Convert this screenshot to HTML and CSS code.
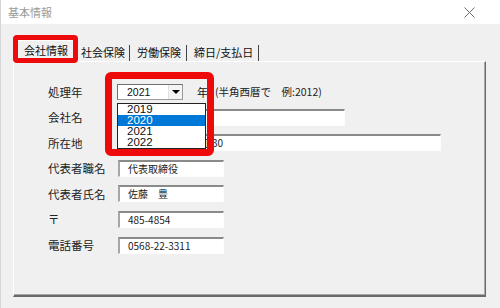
FILE: index.html
```html
<!DOCTYPE html>
<html lang="ja">
<head>
    <meta charset="UTF-8">
    <title>基本情報</title>
    <link rel="stylesheet" href="styles.css">
</head>
<body>
    <div class="window">
        <div class="titlebar">
            <span class="title">基本情報</span>
            <svg class="close" width="11" height="11" viewBox="0 0 11 11"><path d="M0.5 0.5L10.5 10.5M10.5 0.5L0.5 10.5" stroke="#6a6a6a" stroke-width="1"/></svg>
        </div>

        <div class="tabs">
            <div class="tab active">会社情報</div>
            <div class="tab t2">社会保険</div>
            <div class="tab t3">労働保険</div>
            <div class="tab t4">締日/支払日</div>
        </div>

        <div class="panel">
            <div class="row">
                <span class="label">処理年</span>
                <div class="combo">
                    <span class="combo-value">2021</span>
                    <span class="combo-btn"><i class="arrow"></i></span>
                    <ul class="combo-list">
                        <li>2019</li>
                        <li class="sel">2020</li>
                        <li>2021</li>
                        <li>2022</li>
                    </ul>
                </div>
                <span class="unit">年</span>
                <span class="hint">(半角西暦で　例:2012)</span>
            </div>
            <div class="row">
                <span class="label">会社名</span>
                <div class="input w-name"></div>
            </div>
            <div class="row">
                <span class="label">所在地</span>
                <div class="input w-addr"><span class="addr">丁30</span></div>
            </div>
            <div class="row">
                <span class="label">代表者職名</span>
                <div class="input">代表取締役</div>
            </div>
            <div class="row">
                <span class="label">代表者氏名</span>
                <div class="input">佐藤　豊</div>
            </div>
            <div class="row">
                <span class="label">〒</span>
                <div class="input">485-4854</div>
            </div>
            <div class="row">
                <span class="label">電話番号</span>
                <div class="input">0568-22-3311</div>
            </div>
        </div>

        <div class="mark mark-tab"></div>
        <div class="mark mark-combo"></div>
    </div>
</body>
</html>
```

FILE: styles.css
```css
html, body { margin: 0; padding: 0; }
body { font-family: "Noto Sans CJK JP", "DejaVu Sans", sans-serif; color: #111; }

.window {
    position: relative; width: 500px; height: 308px; overflow: hidden;
    background: #f0f0f0; box-sizing: border-box; border-left: 1px solid #d4d4d4;
}

.titlebar {
    height: 24px; background: #fff; display: flex; align-items: center;
    justify-content: space-between; padding: 0 25px 0 7px;
}
.title { font-size: 11px; color: #9a9a9a; }

.tabs { display: flex; align-items: flex-end; height: 21px; margin-top: 16px; padding-left: 16px; }
.tab { font-size: 11px; line-height: 15px; height: 16px; border-right: 1px solid #444; }
.tab.active {
    height: 21px; line-height: 19px; padding: 0 6px; border: 1px solid #fff; border-bottom: 0;
    border-right: 1px solid #888; box-sizing: border-box;
}
.t2 { padding: 0 4px 0 6px; }
.t3 { padding: 0 5px 0 7px; }
.t4 { padding: 0 5px 0 7px; }

.panel {
    margin-left: 12px; width: 473px; height: 236px; box-sizing: border-box;
    border-top: 1px solid #fff; border-left: 1px solid #fff;
    border-right: 1px solid #6a6a6a; border-bottom: 2px solid #6a6a6a;
    box-shadow: inset -1px -1px 0 #a8a8a8;
    padding: 21px 0 0 34px; display: flex; flex-direction: column; gap: 8.6px;
}

.row { display: flex; align-items: center; height: 17px; }
.label { width: 70px; font-size: 11.5px; color: #222; }

.input {
    width: 106px; height: 17px; box-sizing: border-box; background: #fff;
    border-top: 2px solid #8a8a8a; border-left: 2px solid #a6a6a6;
    border-right: 1px solid #fdfdfd; border-bottom: 1px solid #fdfdfd;
    font-size: 10px; line-height: 13px; padding-left: 8px; white-space: nowrap; overflow: hidden;
    color: #222;
}
.w-name { width: 227px; }
.w-addr { width: 323px; }
.addr { padding-left: 74px; }

.combo {
    position: relative; width: 66px; height: 16px; box-sizing: border-box; margin-left: -1px;
    background: #fff; border: 1px solid #9a9a9a; border-top-color: #707070; border-left-color: #707070;
    display: flex; align-items: center; justify-content: space-between;
}
.combo-value { font-family: "Liberation Sans", sans-serif; font-size: 10.5px; padding-left: 9px; }
.combo-btn {
    width: 13px; height: 14px; background: #f4f4f4; display: flex;
    align-items: center; justify-content: center; border-left: 1px solid #e0e0e0;
}
.arrow { width: 0; height: 0; border-left: 4px solid transparent; border-right: 4px solid transparent; border-top: 4px solid #000; }

.combo-list {
    position: absolute; left: -1px; top: 18px; width: 89px; margin: 0; padding: 0;
    list-style: none; background: #fff; border: 1px solid #222; box-sizing: border-box; z-index: 2;
}
.combo-list li {
    font-family: "Liberation Sans", sans-serif; font-size: 11.5px;
    height: 11.2px; line-height: 11px; padding-left: 9px;
}
.combo-list li.sel { background: #0078d7; color: #fff; }

.unit { font-size: 11px; margin-left: 14px; }
.hint { font-size: 10.5px; margin-left: 7px; color: #222; }

.mark { position: absolute; border-style: solid; border-color: #ee0a0a; box-sizing: border-box; z-index: 3; }
.mark-tab { left: 12px; top: 35px; width: 65px; height: 28px; border-width: 5px; border-radius: 4px; }
.mark-combo { left: 104px; top: 72px; width: 109px; height: 84px; border-width: 7px; border-radius: 6px; }
```
